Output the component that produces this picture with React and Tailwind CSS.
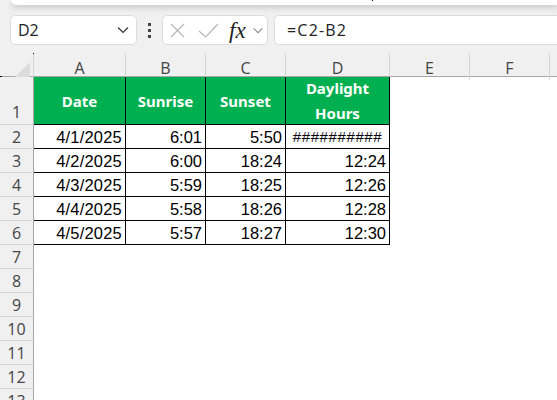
const rows = [
  ["4/1/2025", "6:01", "5:50", "##########"],
  ["4/2/2025", "6:00", "18:24", "12:24"],
  ["4/3/2025", "5:59", "18:25", "12:26"],
  ["4/4/2025", "5:58", "18:26", "12:28"],
  ["4/5/2025", "5:57", "18:27", "12:30"],
];
const ui = { fontFamily: '"Open Sans", "Noto Sans", sans-serif' };
const cellFont = { fontFamily: '"Liberation Sans", Arial, sans-serif' };
const grid = "grid grid-cols-[34px_92px_80px_80px_104px_80px_80px_1fr]";

function Chevron({ className, color = "#404040" }) {
  return (
    <svg className={className} viewBox="0 0 12 8" fill="none" stroke={color} strokeWidth="1.2">
      <path d="M1 1.5 L6 6.5 L11 1.5" />
    </svg>
  );
}

function RowHead({ n, h = "h-6", align = "items-center" }) {
  return (
    <div className={`${h} bg-[#f0f0f0] border-r border-r-[#a6a6a6] border-b border-b-[#d4d4d4] flex justify-center ${align} text-[16px] text-[#444444]`} style={ui}>
      {n}
    </div>
  );
}

function ColHead({ c }) {
  return (
    <div className="h-full border-r border-r-[#d4d4d4] flex items-center justify-center text-[16px] text-[#444444] pt-[3px]" style={ui}>
      {c}
    </div>
  );
}

function GreenCell({ children, extra = "leading-[24px]" }) {
  return (
    <div className={`h-12 bg-[#00b050] border-r border-b border-black flex items-center justify-center text-center text-white font-bold text-[15px] ${extra}`} style={{ fontFamily: '"Noto Sans", sans-serif' }}>
      {children}
    </div>
  );
}

function Cell({ children, extra = "text-[16.5px]" }) {
  return (
    <div className={`h-6 bg-white border-r border-b border-black flex items-center justify-end pr-[3px] pt-[1px] text-black ${extra}`} style={cellFont}>
      {children}
    </div>
  );
}

export default function App() {
  return (
    <div className="relative w-[557px] h-[400px] overflow-hidden bg-[#f0f0f0] flex flex-col">
      <div className="h-[5px] ml-[11px] bg-white rounded-bl-lg shadow-[0_2px_6px_rgba(0,0,0,0.22)] shrink-0" />
      <span className="absolute left-[372px] top-0 w-px h-px bg-black" />
      <span className="absolute left-[33px] top-[53px] w-px h-px bg-black" />
      <span className="absolute left-0 top-[76px] w-[2px] h-px bg-black" />
      <div className="flex items-center h-[30px] mt-[10px] shrink-0">
        <div className="ml-[10px] w-[127px] h-full bg-white border border-[#dcdcdc] rounded-[5px] flex items-center justify-between pl-[7px] pr-[7px] text-[16px] text-[#222222]" style={ui}>
          <span>D2</span>
          <Chevron className="w-[12px] h-[8px]" color="#333333" />
        </div>
        <div className="w-[25px] flex flex-col items-center gap-[3px]">
          <span className="w-[3px] h-[3px] bg-[#444444]" />
          <span className="w-[3px] h-[3px] bg-[#444444]" />
          <span className="w-[3px] h-[3px] bg-[#444444]" />
        </div>
        <div className="w-[106px] h-full bg-white border border-[#dcdcdc] rounded-[5px] flex items-center pl-[7px]">
          <svg className="w-[15px] h-[15px]" viewBox="0 0 15 15" fill="none" stroke="#b5b5b5" strokeWidth="1.2">
            <path d="M1 1 L14 14 M14 1 L1 14" />
          </svg>
          <svg className="ml-[13px] w-[21px] h-[15px]" viewBox="0 0 21 15" fill="none" stroke="#b5b5b5" strokeWidth="1.2">
            <path d="M1 8 L7.5 14 L20 1" />
          </svg>
          <span className="ml-[10px] text-[23px] leading-none italic text-[#222222]" style={{ fontFamily: '"Liberation Serif", serif' }}>fx</span>
          <Chevron className="ml-[6px] w-[12px] h-[7px]" color="#8a8a8a" />
        </div>
        <div className="ml-[6px] flex-1 h-full bg-white border border-r-0 border-[#dcdcdc] rounded-l-[5px] flex items-center pl-[12px] text-[16px] tracking-[1.2px] text-[#222222]" style={ui}>
          =C2-B2
        </div>
      </div>
      <div className="mt-[8px] flex-1 min-h-0 overflow-hidden">
        <div className={`${grid} h-6 border-b border-b-[#a6a6a6] box-border`}>
          <div className="border-r border-r-[#d4d4d4] flex items-end justify-end pr-[3px] pb-[3px]">
            <svg className="w-[15px] h-[15px]" viewBox="0 0 15 15"><path d="M15 0 V15 H0 Z" fill="#dcdcdc" /></svg>
          </div>
          {["A", "B", "C", "D", "E", "F"].map((c) => <ColHead key={c} c={c} />)}
          <div />
        </div>
        <div className={`${grid} bg-white`}>
          <RowHead n={1} h="h-12" align="items-end" />
          <GreenCell>Date</GreenCell>
          <GreenCell>Sunrise</GreenCell>
          <GreenCell>Sunset</GreenCell>
          <GreenCell extra="leading-[25px]">Daylight<br />Hours</GreenCell>
          <div className="col-span-3" />
          {rows.map((r, i) => (
            <div key={i} className="contents">
              <RowHead n={i + 2} />
              <Cell extra="text-[16.5px] tracking-[0.2px]">{r[0]}</Cell>
              <Cell>{r[1]}</Cell>
              <Cell>{r[2]}</Cell>
              <Cell extra={i === 0 ? "!justify-center !pr-0 text-[15px] tracking-[0.6px]" : "text-[16.5px]"}>{r[3]}</Cell>
              <div className="col-span-3" />
            </div>
          ))}
          {[7, 8, 9, 10, 11, 12, 13].map((n) => (
            <div key={n} className="contents">
              <RowHead n={n} />
              <div className="col-span-7" />
            </div>
          ))}
        </div>
      </div>
    </div>
  );
}
